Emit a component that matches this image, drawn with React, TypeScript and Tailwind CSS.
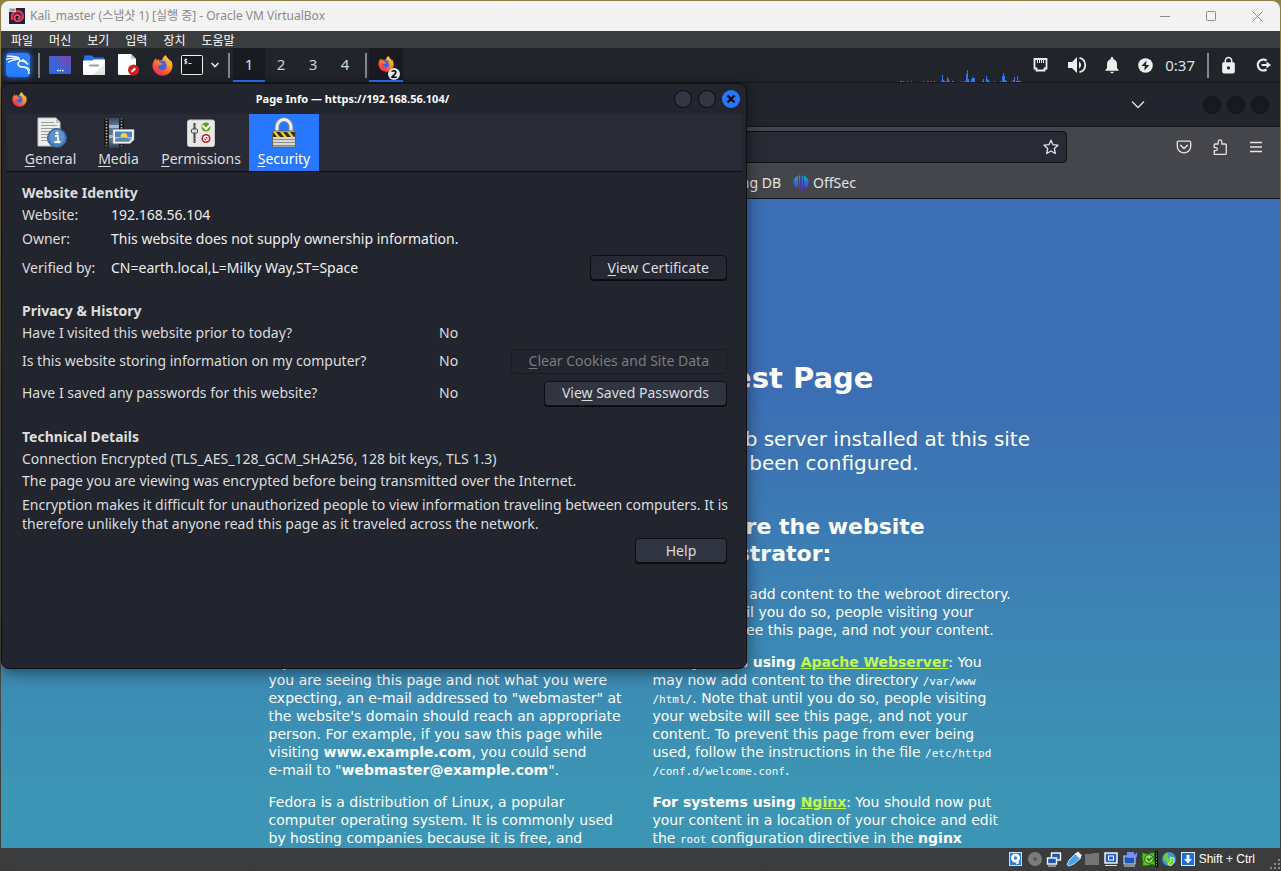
import React from "react";
import { FaFirefoxBrowser } from "react-icons/fa";
import { SiKalilinux } from "react-icons/si";
import { MdNotifications, MdLock } from "react-icons/md";

const menus = ["파일", "머신", "보기", "입력", "장치", "도움말"];
const bookmarks = ["Kali Docs", "Kali Forums", "Kali NetHunter", "Exploit-DB", "Google Hacking DB"];

function Firefox({ size }: { size: number }) {
  return (
    <span className="relative inline-flex shrink-0">
      <svg width={size} height={size} viewBox="0 0 20 20" className="absolute left-0 top-0">
        <circle cx="10" cy="11" r="6.5" fill="#3f63e8" />
      </svg>
      <FaFirefoxBrowser size={size} fill="url(#fox)" className="relative" />
    </span>
  );
}

function Defs() {
  return (
    <svg width="0" height="0" className="absolute" aria-hidden="true">
      <defs>
        <linearGradient id="fox" x1="0.9" y1="0" x2="0.2" y2="1">
          <stop offset="0" stopColor="#ffe14d" />
          <stop offset="0.4" stopColor="#ff9a26" />
          <stop offset="0.75" stopColor="#ff4a3c" />
          <stop offset="1" stopColor="#e8276b" />
        </linearGradient>
      </defs>
    </svg>
  );
}

function VmTitleBar() {
  return (
    <header className="flex h-[30px] shrink-0 items-center rounded-t-lg bg-[#f3f3f3] pl-2 font-['Noto_Sans','Noto_Sans_CJK_KR',sans-serif] text-xs text-[#8a8a8a]">
      <svg width="16" height="16" viewBox="0 0 16 16" className="mr-[5px]">
        <rect width="16" height="16" fill="#1e2236" />
        <path d="M3.500 12C1.500 6 6 2.500 10 3.500s5 5 2.500 8" fill="none" stroke="#e0334e" strokeWidth="2.600" />
        <path d="M12.500 11.500c-2 2.500-6.500 2.500-7-1S8 6 10 7.500s.5 3.500-1.500 3" fill="none" stroke="#ff4f68" strokeWidth="1.700" />
        <rect width="7" height="4" fill="#c9cbd3" />
        <path d="M1 2h5" stroke="#555a6a" />
      </svg>
      <h1 className="grow">Kali_master (스냅샷 1) [실행 중] - Oracle VM VirtualBox</h1>
      <button aria-label="Minimize" className="flex w-[45px] justify-center">
        <svg width="11" height="11" viewBox="0 0 11 11"><path d="M0 5.500h10" stroke="#8c8c8c" /></svg>
      </button>
      <button aria-label="Maximize" className="flex w-[46px] justify-center">
        <svg width="11" height="11" viewBox="0 0 11 11"><rect x=".5" y=".5" width="9" height="9" rx="1" fill="none" stroke="#8c8c8c" /></svg>
      </button>
      <button aria-label="Close" className="flex w-[46px] justify-center">
        <svg width="11" height="11" viewBox="0 0 11 11"><path d="M.5.5l10 10M10.500.5l-10 10" stroke="#8c8c8c" /></svg>
      </button>
    </header>
  );
}

function Separator() {
  return <span className="h-[25px] w-0.5 bg-[#85868a]" />;
}

const load = [
  [0, 1, 2], [3, 1, 1], [7, 1, 1], [11, 1, 1], [23, 1, 1], [27, 1, 2], [31, 1, 1], [34, 1, 1],
  [41, 1, 1], [42, 7, 1], [43, 2, 1], [44, 1, 2], [47, 5, 1], [48, 3, 1], [49, 1, 1], [52, 1, 2],
  [61, 1, 1], [64, 1, 1], [65, 1, 1], [66, 8, 1], [67, 12, 1], [68, 3, 1], [69, 1, 1], [71, 3, 1], [72, 5, 1],
  [73, 4, 2], [82, 1, 1], [83, 3, 1], [86, 6, 1], [87, 3, 1], [88, 2, 1], [89, 1, 1], [94, 1, 1],
  [100, 1, 1], [102, 6, 1], [103, 9, 1], [104, 6, 1], [105, 2, 1], [106, 1, 1], [111, 1, 1], [113, 2, 1], [114, 5, 1],
  [116, 1, 1], [117, 6, 1], [118, 1, 3],
];

function KaliPanel() {
  return (
    <div className="flex h-[35px] shrink-0 items-center border-b border-[#15171c] bg-[#22242c] pl-[5px] pr-[9px]">
      <button aria-label="Applications" className="mr-2 flex size-6 items-center justify-center rounded bg-[#2b7fff] text-white shadow-[0_0_5px_1px_#2369d9]">
        <SiKalilinux size={24} stroke="#fff" strokeWidth={0.9} />
      </button>
      <Separator />
      <button aria-label="Show desktop" className="ml-[3px] flex w-[34px] justify-center">
        <svg width="22" height="18" viewBox="0 0 22 18">
          <defs><linearGradient id="desk" x1="0" y1="1" x2="1" y2="0"><stop offset=".3" stopColor="#3467e0" /><stop offset="1" stopColor="#7c46a8" /></linearGradient></defs>
          <rect width="22" height="18" rx="1" fill="url(#desk)" />
          <path d="M8 14.500h1.500m1 0H12m1 0h1.500" stroke="#fff" strokeWidth="1.500" />
        </svg>
      </button>
      <button aria-label="Files" className="flex w-[34px] justify-center">
        <svg width="22" height="20" viewBox="0 0 22 20">
          <path d="M1 6V1.500Q1 .5 2 .5h7l2 2h9q1 0 1 1V8H1z" fill="#2a6ee8" />
          <path d="M0 5.500h9l2-1h11V19q0 1-1 1H1q-1 0-1-1z" fill="#fff" />
          <path d="M22 8v11q0 1-1 1H10z" fill="#e9e9e9" />
          <path d="M7 10.500h8" stroke="#9a9a9a" strokeWidth="2" strokeLinecap="round" />
        </svg>
      </button>
      <button aria-label="Text editor" className="flex w-[34px] justify-center">
        <svg width="21" height="22" viewBox="0 0 21 22">
          <path d="M1 0h12l5 5v15q0 1-1 1H1q-1 0-1-1V1q0-1 1-1z" fill="#fff" />
          <path d="M13 0l5 5h-5z" fill="#c8c8c8" />
          <circle cx="15.500" cy="16" r="5.500" fill="#d52020" />
          <path d="M13 18.500l.5-2 3-3 1.500 1.500-3 3z" fill="#fff" />
        </svg>
      </button>
      <button aria-label="Firefox" className="flex w-[34px] justify-center"><Firefox size={21} /></button>
      <button aria-label="Terminal" className="ml-0.5">
        <svg width="22" height="20" viewBox="0 0 22 20">
          <rect x=".5" y=".5" width="21" height="19" rx="1" fill="#17181b" stroke="#f0f0f0" />
          <path d="M6 4.500H4.500q-1 0-1 .9t1 .9h.6q1 0 1 .9t-1 .9H3.300M4.800 3.300v6M7.500 8.500h3" fill="none" stroke="#fff" strokeWidth=".9" />
        </svg>
      </button>
      <button aria-label="More terminals" className="ml-[7px] mr-2">
        <svg width="10" height="8" viewBox="0 0 10 8"><path d="M1.500 2l3.500 3.500L8.500 2" fill="none" stroke="#e6e6e6" strokeWidth="1.600" /></svg>
      </button>
      <Separator />
      <nav className="ml-[3px] mr-1 flex text-[15px]">
        <button className="h-[34px] w-8 border-b-2 border-[#2777ff] bg-[#1a1b21] text-[#dfe0e2]">1</button>
        {[2, 3, 4].map((n) => (
          <button key={n} className="h-[34px] w-8 border-b-2 border-transparent text-[#cfd1d4]">{n}</button>
        ))}
      </nav>
      <Separator />
      <button aria-label="Firefox windows, 2 open" className="relative ml-0.5 flex h-[34px] w-[34px] items-center justify-center border-b-2 border-[#2777ff] bg-[#1a1b21]">
        <Firefox size={16} />
        <span className="absolute bottom-0 right-[3px] flex size-3 items-center justify-center rounded-full bg-[#eee] text-[11px] font-bold leading-3 text-black">2</span>
      </button>
      <span className="grow" />
      <svg width="121" height="34" viewBox="0 0 121 34" shapeRendering="crispEdges" className="mr-3 self-end">
        {load.map(([x, h, w]) => (
          <rect key={x} x={x} y={34 - h} width={w} height={h} fill="#2777ff" />
        ))}
      </svg>
      <svg width="15" height="14" viewBox="0 0 15 14" className="mr-5">
        <path d="M1.500 1h12v9.500h-2v2h-8v-2h-2z" fill="none" stroke="#eee" strokeWidth="1.800" />
        <path d="M4.500 2v3M6.500 2v3M8.500 2v3M10.500 2v3" stroke="#eee" />
      </svg>
      <svg width="18" height="18" viewBox="0 0 18 18" className="mr-4">
        <path d="M0 6h4l5-5v16l-5-5H0z" fill="#eee" />
        <path d="M11 5.500a4 4 0 010 7z" fill="#eee" />
        <path d="M11.500 1.800a7.400 7.400 0 010 14.400" fill="none" stroke="#eee" strokeWidth="1.700" />
      </svg>
      <MdNotifications size={20} color="#eee" className="mr-4" />
      <svg width="15" height="15" viewBox="0 0 15 15" className="mr-3">
        <circle cx="7.500" cy="7.500" r="7.300" fill="#eee" />
        <path d="M8.500 2.500L3.500 8h3.300l-.5 4.500L11.500 7H8z" fill="#22242c" />
      </svg>
      <time className="mr-3 text-[15px] text-[#dfe0e2]">0:37</time>
      <Separator />
      <MdLock size={19} color="#eee" className="ml-2.5 mr-[18px]" />
      <svg width="15" height="14" viewBox="0 0 15 14">
        <path d="M10.500 2.500A5.500 5.500 0 1010.500 11.500" fill="none" stroke="#eee" strokeWidth="2.200" />
        <path d="M5.500 6h5V3.500L15 7l-4.500 3.500V8h-5z" fill="#eee" />
      </svg>
    </div>
  );
}

function BrowserChrome() {
  return (
    <div className="shrink-0 bg-[#44464c] text-[#e4e4e6]">
      <div className="flex h-11 items-center justify-end gap-1.5 border-b border-[#15171c] bg-[#22252d] pr-[11px]">
        <button aria-label="List all tabs" className="mr-[52px]">
          <svg width="14" height="9" viewBox="0 0 14 9"><path d="M1 1.500l6 6 6-6" fill="none" stroke="#e4e4e6" strokeWidth="1.300" /></svg>
        </button>
        {["Minimize", "Maximize", "Close"].map((n) => (
          <button key={n} aria-label={n} className="size-[18px] rounded-full border border-[#121318] bg-[#191a20]" />
        ))}
      </div>
      <div className="flex h-10 items-center gap-5 pr-4">
        <div className="ml-[200px] mr-[89px] flex h-8 grow items-center rounded border border-[#101116] bg-[#282a35] pr-[7px]">
          <input aria-label="Address" className="min-w-0 grow bg-transparent outline-none" />
          <button aria-label="Bookmark this page">
            <svg width="16" height="16" viewBox="0 0 16 16"><path d="M8 1.200l2 4.500 5 .5-3.700 3.300 1 5L8 12l-4.300 2.500 1-5L1 6.200l5-.5z" fill="none" stroke="#e4e4e6" strokeWidth="1.300" strokeLinejoin="round" /></svg>
          </button>
        </div>
        <button aria-label="Save to Pocket">
          <svg width="16" height="16" viewBox="0 0 16 16">
            <path d="M2.500 2.200h11q1.200 0 1.200 1.200v4a6.700 6.500 0 01-13.400 0v-4q0-1.200 1.200-1.200z" fill="none" stroke="#e4e4e6" strokeWidth="1.300" />
            <path d="M4.500 6.200L8 9.500l3.500-3.300" fill="none" stroke="#e4e4e6" strokeWidth="1.400" strokeLinecap="round" />
          </svg>
        </button>
        <button aria-label="Extensions">
          <svg width="16" height="16" viewBox="0 0 16 16"><path d="M2.200 15.300V11.600h1.700a1.500 1.500 0 000-3H2.200V6q0-1 1-1h3V2.600a1.800 1.800 0 013.600 0V5h3.500q1 0 1 1v8.300q0 1-1 1z" fill="none" stroke="#e4e4e6" strokeWidth="1.300" strokeLinejoin="round" /></svg>
        </button>
        <button aria-label="Menu">
          <svg width="16" height="16" viewBox="0 0 16 16"><path d="M2 3.500h12M2 8h12M2 12.500h12" stroke="#e4e4e6" strokeWidth="1.300" /></svg>
        </button>
      </div>
      <div className="flex h-8 items-center border-b border-[#15171c] text-sm">
        <div className="flex w-[780px] justify-end gap-6 overflow-hidden whitespace-nowrap">
          {bookmarks.map((b) => <a key={b} href="#">{b}</a>)}
        </div>
        <a href="#" className="ml-3 flex items-center gap-1">
          <svg width="16" height="16" viewBox="0 0 16 16">
            <defs><linearGradient id="off" x1="0" y1="0" x2="0" y2="1"><stop offset="0" stopColor="#14b4c4" /><stop offset=".6" stopColor="#3a5fd0" /><stop offset="1" stopColor="#6a2bd8" /></linearGradient></defs>
            <path d="M5 .8v13Q.5 12 .5 7.500T5 .8zM11 .8v13Q15.500 12 15.500 7.500T11 .8z" fill="url(#off)" />
            <path d="M6 .5h1V14H6zM9 .5h1V14H9z" fill="url(#off)" />
            <path d="M7.500 1h1v15h-1z" fill="#5a35d0" />
          </svg>
          OffSec
        </a>
      </div>
    </div>
  );
}

function WebPage() {
  return (
    <main className="min-h-0 grow overflow-hidden bg-linear-to-b from-[#3c6eb4] from-30% to-[#3c95b4] to-90% font-['DejaVu_Sans',sans-serif] text-sm leading-[18px] text-white">
      <h1 className="pt-[161px] text-center text-[29px] font-bold leading-9">Fedora Webserver Test Page</h1>
      <div className="mx-auto w-[784px]">
        <p className="mt-[31px] whitespace-nowrap pl-6 text-center text-xl leading-6">
          If you can read this page, it means that the web server installed at this site<br />
          is working properly, but has not yet been configured.
        </p>
        <div className="mt-[38px] grid grid-cols-2 gap-6 px-5">
          <section className="flex flex-col gap-3.5">
            <h2 className="mb-1 text-[22px] font-bold leading-[27px]">If you are a member of the general public:</h2>
            <p>The website you just visited is either<br />experiencing problems or is undergoing<br />routine maintenance.</p>
            <p className="whitespace-nowrap">
              If you would like the administrators to know<br />
              you are seeing this page and not what you were<br />
              expecting, an e-mail addressed to "webmaster" at<br />
              the website's domain should reach an appropriate<br />
              person. For example, if you saw this page while<br />
              visiting <b>www.example.com</b>, you could send<br />
              e-mail to "<b>webmaster@example.com</b>".
            </p>
            <p>Fedora is a distribution of Linux, a popular<br />computer operating system. It is commonly used<br />by hosting companies because it is free, and</p>
          </section>
          <section className="flex flex-col gap-3.5 whitespace-nowrap">
            <h2 className="mb-1 text-[22px] font-bold leading-[27px]">If you are the website<br />administrator:</h2>
            <p>You may now add content to the webroot directory.<br />Note that until you do so, people visiting your<br />website will see this page, and not your content.</p>
            <p>
              <b>For systems using <a href="#" className="text-[#c3f74e] underline">Apache Webserver</a></b>: You<br />
              may now add content to the directory <Code>/var/www</Code><br />
              <Code>/html/</Code>. Note that until you do so, people visiting<br />
              your website will see this page, and not your<br />
              content. To prevent this page from ever being<br />
              used, follow the instructions in the file <Code>/etc/httpd</Code><br />
              <Code>/conf.d/welcome.conf</Code>.
            </p>
            <p>
              <b>For systems using <a href="#" className="text-[#c3f74e] underline">Nginx</a></b>: You should now put<br />
              your content in a location of your choice and edit<br />
              the <Code>root</Code> configuration directive in the <b>nginx</b>
            </p>
          </section>
        </div>
      </div>
    </main>
  );
}

function Code({ children }: { children: React.ReactNode }) {
  return <code className="font-['DejaVu_Sans_Mono',monospace] text-[11px] leading-none">{children}</code>;
}

function DialogButton({ k, pre = "", rest, className, disabled }: { k?: string; pre?: string; rest: string; className?: string; disabled?: boolean }) {
  return (
    <button
      disabled={disabled}
      className={"h-[25px] rounded border px-[17px] leading-none " + (disabled ? "border-[#191b21] bg-[#22252d] text-[#7b7c81] " : "border-[#0e0f13] shadow-[0_1px_0_#0a0b0e] ") + className}
    >
      {pre}{k && <u className="underline-offset-2">{k}</u>}{rest}
    </button>
  );
}

function GeneralIcon() {
  return (
    <svg width="32" height="32" viewBox="0 0 32 32">
      <path d="M3 1h18l4 4v24H3z" fill="#eeeeec" stroke="#c4c5c2" />
      <path d="M21 1l4 5h-4z" fill="#bbb" />
      <path d="M6 5.500h13M6 8.500h16M6 11.500h16M6 14.500h14M6 17.500h12M6 20.500h9M6 23.500h8" stroke="#9b9d98" strokeWidth="1" />
      <circle cx="22" cy="21" r="9.500" fill="#4a7ab5" stroke="#2d5a94" />
      <circle cx="22" cy="20" r="7.500" fill="#5f92cc" />
      <circle cx="22" cy="16" r="1.600" fill="#fff" />
      <path d="M20 19h3v5.500h1.500M19.500 25h6" fill="none" stroke="#fff" strokeWidth="1.800" />
    </svg>
  );
}

function MediaIcon() {
  return (
    <svg width="32" height="32" viewBox="0 0 32 32">
      <defs>
        <linearGradient id="film" x1="0" y1="0" x2="0" y2="1">
          <stop offset="0" stopColor="#fff" stopOpacity=".3" /><stop offset=".25" stopColor="#fff" />
          <stop offset=".75" stopColor="#fff" /><stop offset="1" stopColor="#fff" stopOpacity=".1" />
        </linearGradient>
        <mask id="fade"><rect width="32" height="32" fill="url(#film)" /></mask>
      </defs>
      <g mask="url(#fade)">
        <path d="M1 1h20v30H1z" fill="#15171b" />
        <path d="M6 1h10v30H6z" fill="#5c7698" />
        <path d="M6 8h10v3H6zM6 18h10v3H6z" fill="#9fb8d8" />
        <path d="M3.500 1v30M18.500 1v30" stroke="#c9c4a0" strokeWidth="1.500" strokeDasharray="1.500 1.500" />
      </g>
      <path d="M10 12.500h21v10l-4 4H10z" fill="#f5f5f5" stroke="#aaa" strokeWidth=".6" />
      <path d="M12 14.500h17v7l-3 3H12z" fill="#4b86c9" />
      <path d="M12 20h17v2l-3 2.500H12z" fill="#a7bed4" />
      <circle cx="21" cy="19.500" r="3.500" fill="#f0d445" />
      <path d="M12 22q8-3 16 0l-2 2.500H12z" fill="#5f86a8" />
      <path d="M27 26.500l.5-3.500 3.500-.5z" fill="#ddd" />
    </svg>
  );
}

function PermissionsIcon() {
  return (
    <svg width="32" height="32" viewBox="0 0 32 32">
      <rect x="2.500" y="3" width="27" height="26.500" rx="2" fill="#e8e8e6" stroke="#c8c8c6" />
      <path d="M9.500 6v20" stroke="#444" strokeWidth="2" />
      <path d="M8 8.500h3M8 21.500h3M8 24.500h3" stroke="#888" />
      <rect x="6.500" y="12" width="6" height="4" rx="1" fill="#ddd" stroke="#444" />
      <circle cx="21" cy="10" r="4.500" fill="#58a611" />
      <path d="M17.500 8.500l3.500 3.500 5-5" fill="none" stroke="#fff" strokeWidth="2" />
      <circle cx="21" cy="21.500" r="4.500" fill="#c51a1a" />
      <circle cx="21" cy="21.500" r="2.300" fill="none" stroke="#fff" strokeWidth="1.200" />
      <path d="M19.300 19.800l3.400 3.400" stroke="#fff" strokeWidth="1.200" />
    </svg>
  );
}

function SecurityIcon() {
  return (
    <svg width="32" height="32" viewBox="0 0 32 32">
      <path d="M9 15V10a7 7.500 0 0114 0v5" fill="none" stroke="#8a8c88" strokeWidth="4.500" />
      <path d="M9 15V10a7 7.500 0 0114 0v5" fill="none" stroke="#e9ebe7" strokeWidth="3" />
      <path d="M4.500 14h23v16h-23z" fill="#d8d9d5" stroke="#62645f" />
      <path d="M5 15h22v5H5z" fill="#302f2a" />
      <path d="M5 15h3l4 5H9zM12 15h3l4 5h-3zM19 15h3l4 5h-3z" fill="#f0cd2e" />
      <path d="M5 22.500h22M5 25.500h22M5 28.500h22" stroke="#8d8f8a" />
    </svg>
  );
}

const tabs = [
  { k: "G", rest: "eneral", icon: <GeneralIcon />, cls: "w-[67px]" },
  { k: "M", rest: "edia", icon: <MediaIcon />, cls: "w-[69px]" },
  { k: "P", rest: "ermissions", icon: <PermissionsIcon />, cls: "w-24" },
  { k: "S", rest: "ecurity", icon: <SecurityIcon />, cls: "w-[70px] bg-[#2777ff] text-white" },
];

function PageInfo() {
  return (
    <section className="absolute left-0 top-0 w-[746px] rounded-lg border border-[#101116] bg-[#22252d] pb-[105px] text-sm text-[#dcddde] shadow-[0_3px_16px_rgba(0,0,0,0.5)]">
      <div className="flex h-[30px] items-center pl-2.5 pr-1.5">
        <Firefox size={15} />
        <h2 className="grow pr-[52px] text-center text-[11px] font-bold text-white">Page Info — https://192.168.56.104/</h2>
        <div className="-ml-14 flex gap-1.5">
          <button aria-label="Minimize" className="size-[18px] rounded-full border border-[#0c0d10] bg-[#323543]" />
          <button aria-label="Maximize" className="size-[18px] rounded-full border border-[#0c0d10] bg-[#323543]" />
          <button aria-label="Close" className="flex size-[18px] items-center justify-center rounded-full bg-[#2777ff]">
            <svg width="10" height="10" viewBox="0 0 10 10"><path d="M1.500 1.500l7 7M8.500 1.500l-7 7" stroke="#0c0d12" strokeWidth="2.400" /></svg>
          </button>
        </div>
      </div>
      <div role="tablist" className="mx-1 flex h-[58px] border-b border-[#0e0f13] bg-[#282a35] pl-[11px]">
        {tabs.map((t) => (
          <button key={t.k} role="tab" aria-selected={t.k === "S"} className={"flex flex-col items-center pt-[3px] leading-5 " + t.cls}>
            {t.icon}
            <span><u className="underline-offset-2">{t.k}</u>{t.rest}</span>
          </button>
        ))}
      </div>
      <div className="pl-5 pr-[19px] pt-[11px]">
        <h3 className="h-[21px] font-bold leading-5">Website Identity</h3>
        <div className="grid grid-cols-[89px_1fr_auto] items-center">
          <span className="leading-[22px]">Website:</span>
          <span className="col-span-2 text-[#eee]">192.168.56.104</span>
          <span className="leading-[26px]">Owner:</span>
          <span className="col-span-2 text-[#eee]">This website does not supply ownership information.</span>
          <span className="leading-[31px]">Verified by:</span>
          <span className="text-[#eee]">CN=earth.local,L=Milky Way,ST=Space</span>
          <DialogButton k="V" rest="iew Certificate" className="bg-[#262833]" />
        </div>
        <h3 className="mt-[18px] h-5 font-bold leading-5">Privacy &amp; History</h3>
        <div className="grid grid-cols-[417px_1fr] items-center">
          <span className="leading-6">Have I visited this website prior to today?</span>
          <span>No</span>
          <span className="leading-8">Is this website storing information on my computer?</span>
          <span className="flex items-center justify-between">No <DialogButton k="C" rest="lear Cookies and Site Data" disabled className="" /></span>
          <span className="leading-8">Have I saved any passwords for this website?</span>
          <span className="flex items-center justify-between">No <DialogButton pre="Vie" k="w" rest=" Saved Passwords" className="bg-[#313441]" /></span>
        </div>
        <h3 className="mt-[17px] h-[22px] font-bold leading-[22px]">Technical Details</h3>
        <p className="leading-[22px]">Connection Encrypted (TLS_AES_128_GCM_SHA256, 128 bit keys, TLS 1.3)</p>
        <p className="leading-[22px]">The page you are viewing was encrypted before being transmitted over the Internet.</p>
        <p className="mt-[3px] whitespace-nowrap leading-[19px]">Encryption makes it difficult for unauthorized people to view information traveling between computers. It is<br />therefore unlikely that anyone read this page as it traveled across the network.</p>
        <div className="mt-[5px] flex justify-end"><DialogButton rest="Help" className="w-[92px] bg-[#313441]" /></div>
      </div>
    </section>
  );
}

function StatusIcons() {
  return (
    <svg width="187" height="16" viewBox="0 0 187 16" className="mr-1">
      <rect x="1.500" y="1.500" width="12" height="13" fill="#2a80d8" stroke="#bfe0ff" />
      <circle cx="7.500" cy="7" r="4.500" fill="#fff" /><circle cx="7.500" cy="7" r="1.700" fill="#2a80d8" />
      <path d="M8 12.500l3-1" stroke="#fff" strokeWidth="1.500" />
      <circle cx="27" cy="8" r="7" fill="#7b7b7b" /><circle cx="27" cy="8" r="2" fill="#5a5a5a" />
      <rect x="43.500" y="2" width="9" height="7" fill="#1d55b5" stroke="#fff" strokeWidth="1.400" />
      <rect x="39.500" y="7" width="9" height="6" fill="#1d55b5" stroke="#fff" strokeWidth="1.400" />
      <path d="M40 15h8" stroke="#ddd" />
      <path d="M59 14l2-5 7-7 5 5-7 6-5 2z" fill="#4aa3ea" stroke="#d9edff" strokeWidth=".8" />
      <path d="M67 3l3-2.500 4 4-2.500 3z" fill="#eef6ff" />
      <path d="M77 3h6l1-1h7v12H77z" fill="#747474" />
      <rect x="97" y="2" width="12" height="10" fill="#1d66c8" stroke="#fff" strokeWidth="1.400" />
      <rect x="100.500" y="5" width="5" height="4" fill="#1d66c8" stroke="#fff" />
      <path d="M97 14.500h12" stroke="#ddd" />
      <rect x="116" y="5" width="11" height="8" fill="#1d55b5" stroke="#cfe2fa" />
      <rect x="119" y="1" width="7" height="6" fill="#6f8fff" /><path d="M126 3.500l3-2v5z" fill="#6f8fff" />
      <path d="M116 15h11" stroke="#ddd" />
      <path d="M134.500 1.500l4 1.500 4-1 4-.5-.5 4 .5 5 1 4-4-1-4 1-5 .5.5-4-1-4z" fill="#58c322" stroke="#1d6b0c" strokeWidth=".8" />
      <circle cx="141" cy="8" r="4.300" fill="#9be060" stroke="#1d6b0c" />
      <path d="M139 7l2 2.500 3-3" fill="none" stroke="#1d6b0c" strokeWidth="1.300" />
      <rect x="147" y="0" width="3" height="16" fill="#000" />
      <path d="M148.500 1v14" stroke="#1c9a1c" strokeWidth="1" strokeDasharray="2 1" />
      <circle cx="161" cy="8" r="7" fill="#3b8fdc" />
      <path d="M158 1.500q4 2 2 5l4 3-2 5q-4 0-3-3l-4-4z" fill="#6dd22e" />
      <path d="M162 6l4 1v4l-3 4-3-2 3-3z" fill="#6dd22e" stroke="#e8f8dc" strokeWidth=".8" />
      <rect x="173.500" y="1.500" width="13" height="13" fill="#1f6fd0" stroke="#d7ebff" />
      <path d="M178.500 4h3v4h2.500l-4 4.500L176 8h2.500z" fill="#fff" />
    </svg>
  );
}

export default function App() {
  return (
    <div className="flex h-screen flex-col bg-linear-to-b from-[#8f8048] to-[#3a3a3a] p-px font-['Noto_Sans','Noto_Sans_CJK_KR',sans-serif]">
      <Defs />
      <VmTitleBar />
      <nav className="flex h-[17px] shrink-0 items-center gap-4 bg-[#3b3c3d] pl-2.5 font-['Noto_Sans_CJK_KR',sans-serif] text-xs leading-none text-white">
        {menus.map((m) => <button key={m}>{m}</button>)}
      </nav>
      <KaliPanel />
      <div className="relative flex min-h-0 grow flex-col">
        <BrowserChrome />
        <WebPage />
        <PageInfo />
      </div>
      <footer className="flex h-[22px] shrink-0 items-center justify-end rounded-b-lg bg-[#3b3c3d] font-['Liberation_Sans',sans-serif] text-xs text-white">
        <StatusIcons />
        <span className="mr-[13px]">Shift + Ctrl</span>
        <svg width="12" height="12" viewBox="0 0 12 12" className="self-end">
          <path d="M10 2h2M10 6h2M6 6h2M10 10h2M6 10h2M2 10h2" stroke="#8a8a8a" strokeWidth="2" />
        </svg>
      </footer>
    </div>
  );
}
